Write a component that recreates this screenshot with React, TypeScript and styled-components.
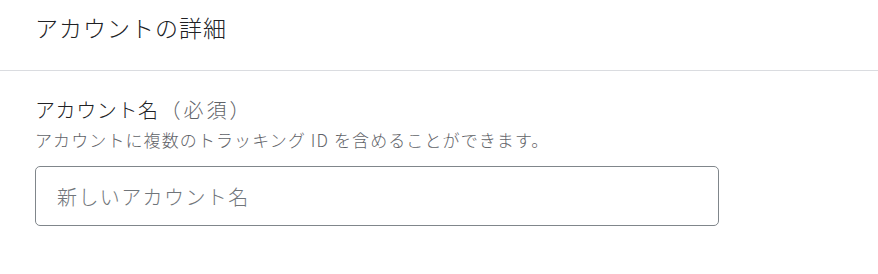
import styled, { createGlobalStyle } from "styled-components";

const GlobalStyle = createGlobalStyle`
  html, body {
    margin: 0;
    padding: 0;
    background: #ffffff;
  }
  body {
    font-family: "Noto Sans CJK JP", "Noto Sans", sans-serif;
  }
`;

const Page = styled.div`
  width: 878px;
  height: 274px;
  display: flex;
  flex-direction: column;
  background: #ffffff;
`;

const Header = styled.div`
  height: 71px;
  box-sizing: border-box;
  padding: 9px 0 0 35px;
  border-bottom: 1px solid #dadce0;
`;

const Title = styled.h1`
  margin: 0;
  font-size: 23px;
  font-weight: 300;
  line-height: 36px;
  letter-spacing: 1px;
  color: #202124;
`;

const Body = styled.div`
  display: flex;
  flex-direction: column;
  padding: 23px 0 0 35px;
`;

const Label = styled.label`
  font-size: 20px;
  font-weight: 300;
  line-height: 32px;
  letter-spacing: 0.6px;
  color: #202124;
`;

const Required = styled.span`
  color: #5f6368;
  letter-spacing: 3px;
  margin-left: 2px;
`;

const Help = styled.div`
  font-size: 17px;
  font-weight: 300;
  line-height: 24px;
  letter-spacing: 1.1px;
  color: #5f6368;
  margin: 2px 0 14px;
`;

const Input = styled.input`
  width: 684px;
  height: 60px;
  box-sizing: border-box;
  border: 1px solid #80868b;
  border-radius: 5px;
  padding: 0 21px;
  font-family: "Noto Sans CJK JP", "Noto Sans", sans-serif;
  font-size: 20px;
  font-weight: 300;
  letter-spacing: 1.4px;
  color: #202124;
  outline: none;

  &::placeholder {
    color: #70757a;
  }
`;

export default function App() {
  return (
    <>
      <GlobalStyle />
      <Page>
        <Header>
          <Title>アカウントの詳細</Title>
        </Header>
        <Body>
          <Label>
            アカウント名<Required>（必須）</Required>
          </Label>
          <Help>アカウントに複数のトラッキング ID を含めることができます。</Help>
          <Input placeholder="新しいアカウント名" />
        </Body>
      </Page>
    </>
  );
}
